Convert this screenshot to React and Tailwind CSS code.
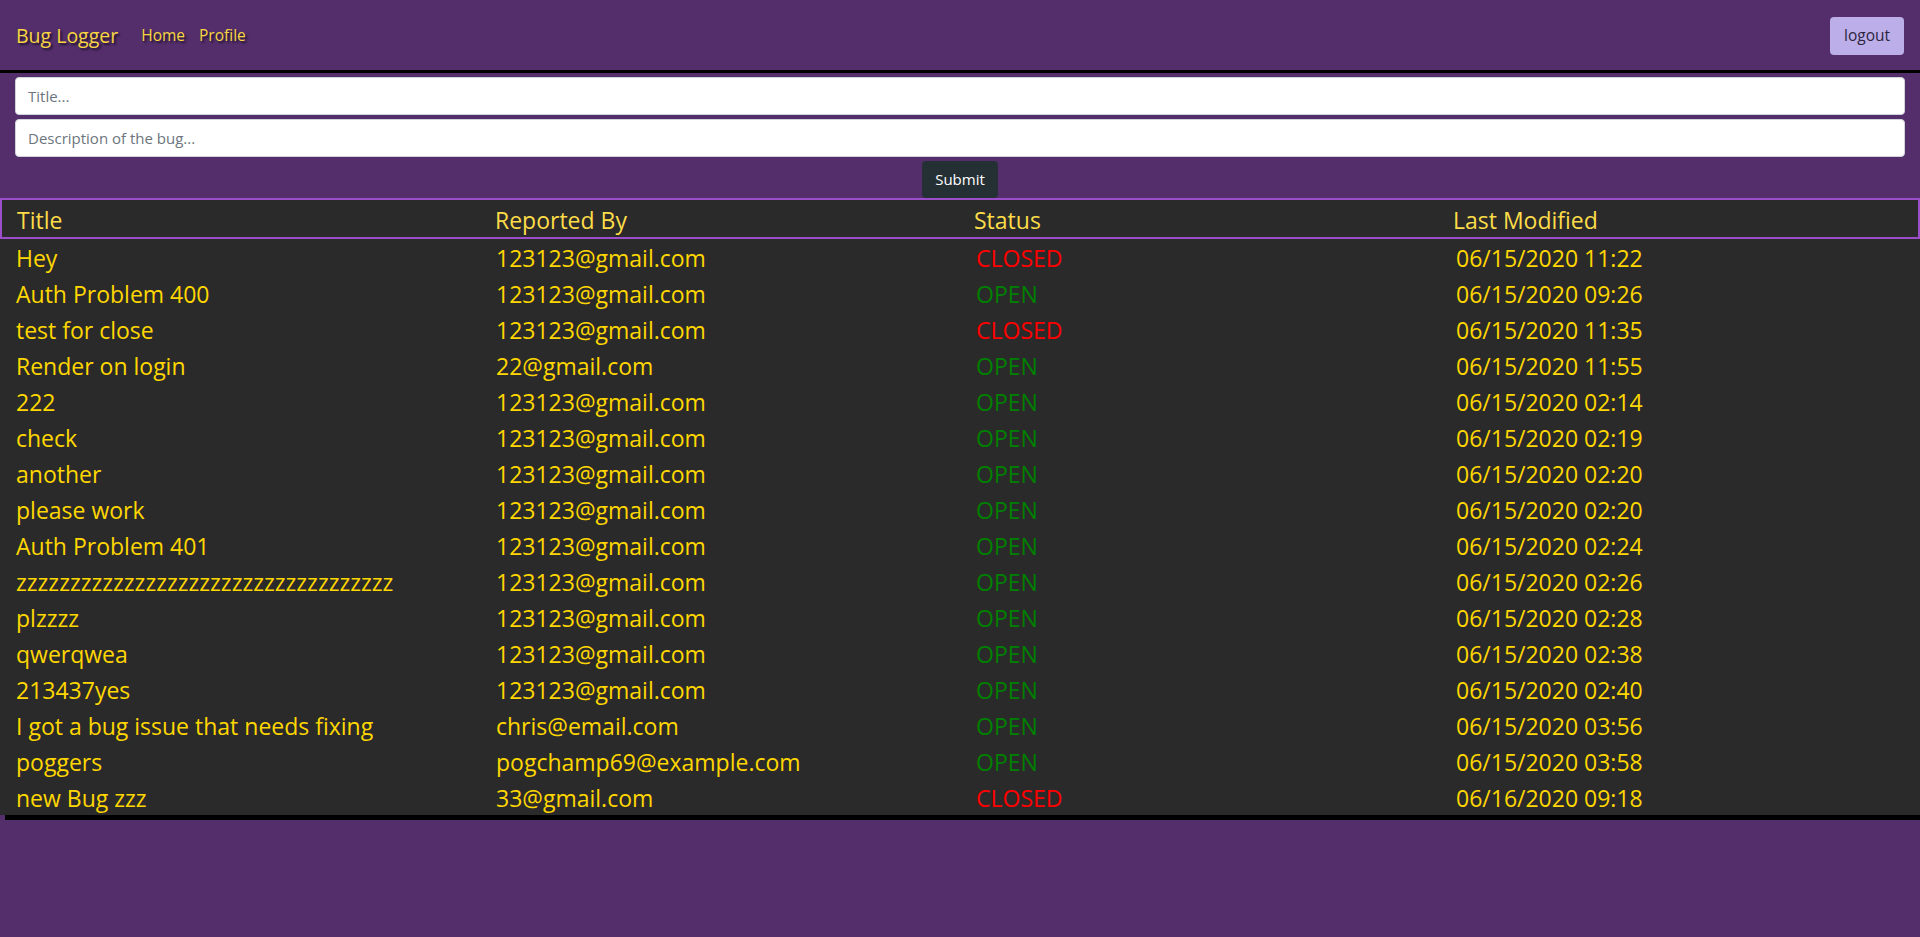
import React from "react";

const rows = [
  ["Hey", "123123@gmail.com", "CLOSED", "06/15/2020 11:22"],
  ["Auth Problem 400", "123123@gmail.com", "OPEN", "06/15/2020 09:26"],
  ["test for close", "123123@gmail.com", "CLOSED", "06/15/2020 11:35"],
  ["Render on login", "22@gmail.com", "OPEN", "06/15/2020 11:55"],
  ["222", "123123@gmail.com", "OPEN", "06/15/2020 02:14"],
  ["check", "123123@gmail.com", "OPEN", "06/15/2020 02:19"],
  ["another", "123123@gmail.com", "OPEN", "06/15/2020 02:20"],
  ["please work", "123123@gmail.com", "OPEN", "06/15/2020 02:20"],
  ["Auth Problem 401", "123123@gmail.com", "OPEN", "06/15/2020 02:24"],
  ["zzzzzzzzzzzzzzzzzzzzzzzzzzzzzzzzzzz", "123123@gmail.com", "OPEN", "06/15/2020 02:26"],
  ["plzzzz", "123123@gmail.com", "OPEN", "06/15/2020 02:28"],
  ["qwerqwea", "123123@gmail.com", "OPEN", "06/15/2020 02:38"],
  ["213437yes", "123123@gmail.com", "OPEN", "06/15/2020 02:40"],
  ["I got a bug issue that needs fixing", "chris@email.com", "OPEN", "06/15/2020 03:56"],
  ["poggers", "pogchamp69@example.com", "OPEN", "06/15/2020 03:58"],
  ["new Bug zzz", "33@gmail.com", "CLOSED", "06/16/2020 09:18"],
];

export default function App() {
  return (
    <div className="min-h-[937px] bg-[#542e6a] font-['Open_Sans',sans-serif]">
      <nav className="h-[73px] flex items-center px-4 pt-[2px] border-b-[3px] border-black">
        <span className="text-[19.5px] text-[#f7d640] [text-shadow:2px_2px_2px_#1f1330] mr-[23px]">Bug Logger</span>
        <span className="text-[15.5px] text-[#f7d640] [text-shadow:2px_2px_2px_#1f1330] mr-[14px]">Home</span>
        <span className="text-[15.5px] text-[#f7d640] [text-shadow:2px_2px_2px_#1f1330]">Profile</span>
        <button className="ml-auto h-[38px] px-[14px] rounded-[4px] bg-[#bcaee8] text-[#2d2440] text-[15.5px]">logout</button>
      </nav>
      <div className="px-[15px] pt-[4px] flex flex-col gap-[4px]">
        <input
          className="h-[38px] w-full rounded-[4px] border border-[#ced4da] bg-white px-[12px] text-[15px] placeholder:text-[#6c757d] outline-none"
          placeholder="Title..."
        />
        <input
          className="h-[38px] w-full rounded-[4px] border border-[#ced4da] bg-white px-[12px] text-[15px] placeholder:text-[#6c757d] outline-none"
          placeholder="Description of the bug..."
        />
        <div className="flex justify-center">
          <button className="h-[37px] w-[76px] rounded-[4px] bg-[#243034] text-white text-[15px]">Submit</button>
        </div>
      </div>
      <div className="bg-[#2a2a2a]">
        <div className="grid grid-cols-4 h-[41px] items-center pt-[3px] border-2 border-[#9b4dca] text-[23px] text-[#fcdc48]">
          <div className="pl-[15px]">Title</div>
          <div className="pl-[14px]">Reported By</div>
          <div className="pl-[14px]">Status</div>
          <div className="pl-[14px]">Last Modified</div>
        </div>
        {rows.map((r, i) => (
          <div key={i} className="grid grid-cols-4 h-[36px] items-center pt-[2px] text-[23px] text-[#ffd700]">
            <div className="pl-[16px] whitespace-nowrap">{r[0]}</div>
            <div className="pl-[16px]">{r[1]}</div>
            <div className={"pl-[16px] " + (r[2] === "OPEN" ? "text-[#008000]" : "text-[#ff0000]")}>{r[2]}</div>
            <div className="pl-[16px]">{r[3]}</div>
          </div>
        ))}
      </div>
      <div className="ml-[5px] h-[5px] bg-black"></div>
    </div>
  );
}
